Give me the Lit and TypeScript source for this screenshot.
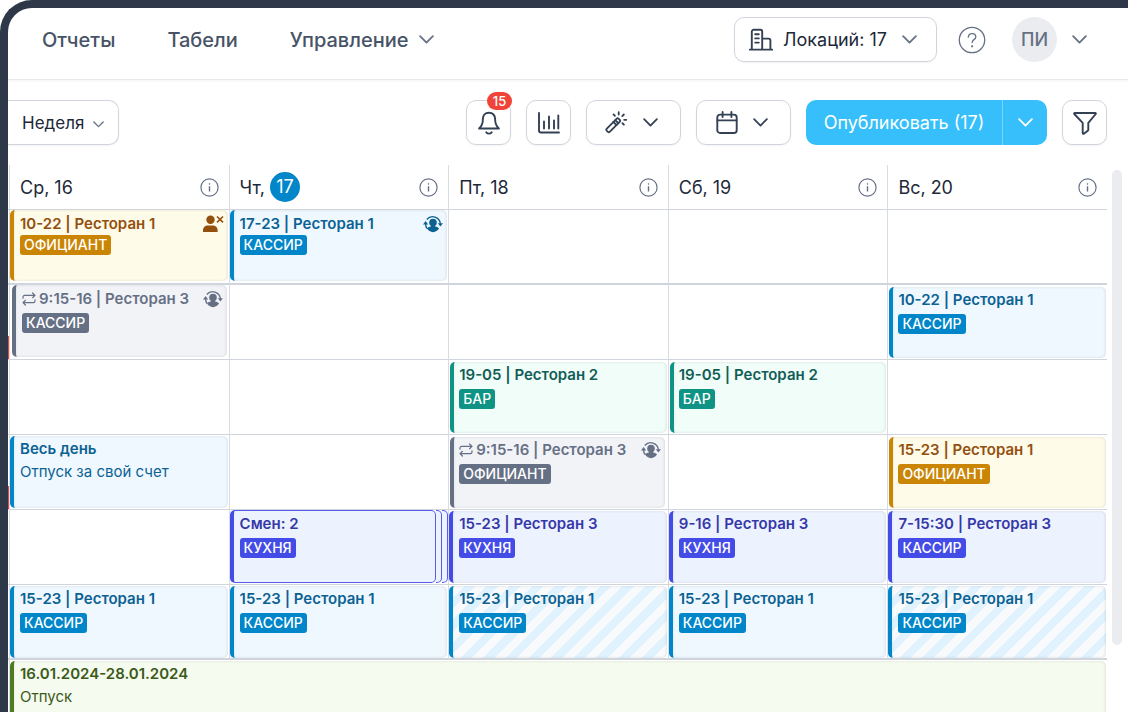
import { LitElement, html, css, svg, nothing } from "lit";
import { customElement, property } from "lit/decorators.js";
import { classMap } from "lit/directives/class-map.js";

interface Shift {
  tone: "gold" | "sky" | "gray" | "teal" | "indigo" | "moss";
  title: string;
  role?: string;
  note?: string;
  icon?: "swap" | "dismiss";
  repeat?: boolean;
  inset?: boolean;
  stack?: boolean;
  striped?: boolean;
  first?: boolean;
}

interface Row {
  alert?: boolean;
  heavy?: boolean;
  cells: (Shift | null)[];
}

const sky = (title: string, extra: Partial<Shift> = {}): Shift => ({ tone: "sky", title, role: "КАССИР", ...extra });

const DAYS = [
  { name: "Ср,", date: "16" },
  { name: "Чт,", date: "17", today: true },
  { name: "Пт,", date: "18" },
  { name: "Сб,", date: "19" },
  { name: "Вс,", date: "20" },
];

const ROWS: Row[] = [
  {
    heavy: true,
    cells: [
      { tone: "gold", title: "10-22 | Ресторан 1", role: "ОФИЦИАНТ", icon: "dismiss", first: true },
      sky("17-23 | Ресторан 1", { icon: "swap", first: true }),
      null, null, null,
    ],
  },
  {
    alert: true,
    cells: [
      { tone: "gray", title: "9:15-16 | Ресторан 3", role: "КАССИР", icon: "swap", repeat: true },
      null, null, null,
      sky("10-22 | Ресторан 1", { inset: true }),
    ],
  },
  {
    cells: [
      null, null,
      { tone: "teal", title: "19-05 | Ресторан 2", role: "БАР", inset: true },
      { tone: "teal", title: "19-05 | Ресторан 2", role: "БАР", inset: true },
      null,
    ],
  },
  {
    alert: true,
    cells: [
      { tone: "sky", title: "Весь день", note: "Отпуск за свой счет" },
      null,
      { tone: "gray", title: "9:15-16 | Ресторан 3", role: "ОФИЦИАНТ", icon: "swap", repeat: true, inset: true },
      null,
      { tone: "gold", title: "15-23 | Ресторан 1", role: "ОФИЦИАНТ", inset: true },
    ],
  },
  {
    cells: [
      null,
      { tone: "indigo", title: "Смен: 2", role: "КУХНЯ", stack: true },
      { tone: "indigo", title: "15-23 | Ресторан 3", role: "КУХНЯ" },
      { tone: "indigo", title: "9-16 | Ресторан 3", role: "КУХНЯ" },
      { tone: "indigo", title: "7-15:30 | Ресторан 3", role: "КАССИР" },
    ],
  },
  {
    heavy: true,
    cells: [
      sky("15-23 | Ресторан 1"),
      sky("15-23 | Ресторан 1"),
      sky("15-23 | Ресторан 1", { striped: true }),
      sky("15-23 | Ресторан 1"),
      sky("15-23 | Ресторан 1", { striped: true }),
    ],
  },
];

const icon = (size: number, body: unknown, width = 1.5, box = 24) => html`
  <svg width=${size} height=${size} viewBox="0 0 ${box} ${box}" fill="none" stroke="currentColor"
    stroke-width=${width} stroke-linecap="round" stroke-linejoin="round" aria-hidden="true">${body}</svg>`;

const chevron = (w: number) => html`
  <svg width=${w} height=${w / 2 + 1} viewBox="0 0 16 9" fill="none" stroke="currentColor"
    stroke-width="1.9" stroke-linecap="round" stroke-linejoin="round" aria-hidden="true"><path d="M1.2 1.2 8 8l6.800-6.800"/></svg>`;

const bell = icon(24, svg`<path d="M12 1.700c-3.800 0-6.100 2.700-6.100 6.200 0 5-1.300 7.300-3.800 9.600h19.800c-2.500-2.300-3.800-4.600-3.800-9.600 0-3.500-2.300-6.200-6.100-6.200Z"/><path d="M9.300 21.300c.7.900 1.600 1.300 2.700 1.300s2-.4 2.700-1.300"/>`, 1.9);
const chart = icon(24, svg`<path d="M2 2v17.500c0 1.100.9 2 2 2h18M7 17.500v-7M12 17.500V5.500M17 17.500v-8M21.300 17.500V4.500"/>`, 1.9);
const wand = icon(25, svg`<path d="M2.700 19.600 13.300 9a1.300 1.300 0 0 1 1.800 0l1.400 1.400a1.300 1.300 0 0 1 0 1.800L5.900 22.800a1.300 1.300 0 0 1-1.800 0l-1.400-1.400a1.300 1.300 0 0 1 0-1.800Z"/><path d="m9.800 12.500 3.200 3.200M11.700 10.600l3.200 3.200M15.300 4.700V2.300M19 6.300l1.600-1.600M21 10.200h2.200M19.200 13.800l1.500 1.500M11.300 6 9.900 4.600"/>`, 1.9, 26);
const calendar = icon(24, svg`<rect x="2.300" y="3.600" width="19.400" height="18.400" rx="2.800"/><path d="M2.500 9.400h19M7.600 1v5M16.400 1v5"/>`, 1.9);
const funnel = icon(24, svg`<path d="M1.700 2h20.600c.5 0 .8.600.4 1l-7.400 8.800v6.900c0 .4-.2.800-.5 1l-4 3c-.5.400-1.100 0-1.100-.6V11.800L1.300 3c-.4-.4-.1-1 .4-1Z"/>`, 1.9);
const building = icon(24, svg`<path d="M.8 21.600h22.400M2.800 21.400V3.600c0-1 .8-1.800 1.800-1.800h6.800c1 0 1.800.8 1.800 1.800v17.800M13.400 10.600h6.200c1 0 1.800.8 1.800 1.800v9M6.200 6.200h3.600M6.200 10.400h3.600M6.200 14.600h3.600"/>`, 1.9);
const help = html`<svg width="28" height="28" viewBox="0 0 28 28" fill="none" stroke="currentColor" stroke-width="1.300" stroke-linecap="round" aria-hidden="true"><circle cx="14" cy="14" r="12.700"/><path d="M10.300 11.200c.2-2.200 1.700-3.500 3.800-3.500s3.700 1.300 3.700 3.200c0 2.800-3.700 2.700-3.700 5.600"/><circle cx="14.100" cy="20.300" r=".5" fill="currentColor"/></svg>`;
const info = html`<svg width="19" height="19" viewBox="0 0 19 19" fill="none" stroke="currentColor" stroke-width="1.200" aria-hidden="true"><circle cx="9.500" cy="9.500" r="8.600"/><path d="M9.500 8.300v5.200" stroke-width="1.400"/><circle cx="9.500" cy="5.900" r=".5" fill="currentColor" stroke-width=".6"/></svg>`;
const repeatIcon = html`<svg width="14" height="14" viewBox="0 0 14 14" fill="none" stroke="currentColor" stroke-width="1.200" stroke-linecap="round" stroke-linejoin="round" aria-hidden="true"><path d="M1 6.200V5a1.600 1.600 0 0 1 1.600-1.600H13M10.600 1 13 3.400l-2.400 2.300M13 7.800V9a1.600 1.600 0 0 1-1.600 1.600H1M3.400 8.300 1 10.600 3.400 13"/></svg>`;
const swapIcon = html`<svg width="20" height="18" viewBox="0 0 20 18" aria-hidden="true"><g fill="currentColor"><circle cx="10" cy="7.500" r="3.800"/><path d="M7.900 9h4.200v2.600c2 .4 3.200 1 3.900 2A7.700 7.700 0 0 1 10 17.300a7.700 7.700 0 0 1-6-3.700c.7-1 1.900-1.600 3.900-2Z"/><path d="M0 9.400 2.600 6l2.600 3.400ZM14.800 8.200H20l-2.600 3.400Z"/></g><g fill="none" stroke="currentColor" stroke-width="1.400"><path d="M3.800 4.500a7.700 7.700 0 0 1 13.600 4.200M2.600 9c0 1.800.5 3.300 1.500 4.600"/></g></svg>`;
const dismissIcon = html`<svg width="21" height="18" viewBox="0 0 21 18" aria-hidden="true"><g fill="currentColor"><circle cx="7.500" cy="4.700" r="4.200"/><path d="M0 17v-1.800c0-3 2.300-4.700 4.800-4.700h5c2.500 0 4.800 1.700 4.800 4.700V17Z"/></g><path d="m14 1.500 6 5.800m0-5.800-6 5.800" stroke="currentColor" stroke-width="1.600"/></svg>`;

@customElement("shift-card")
export class ShiftCard extends LitElement {
  @property({ attribute: false }) shift!: Shift;

  static styles = css`
    :host { display: block; }
    .wrap { display: flex; }
    .card {
      flex: 1;
      min-width: 0;
      box-sizing: border-box;
      height: 72px;
      margin-top: 1px;
      margin-right: 1px;
      padding: 3px 4px 0 6px;
      border-left: 4px solid var(--bar);
      border-radius: 5px;
      background: var(--fill);
      color: var(--ink);
      box-shadow: inset -1px 0 3px rgb(16 24 40 / 6%), inset 0 0 3px rgb(16 24 40 / 6%);
    }
    .first { height: 71px; margin-top: 0; padding-top: 4px; }
    .repeating { margin: 0 2px; padding-top: 4px; }
    .inset { height: 71px; margin: 2px 1px 0 1px; padding-left: 5px; }
    .inset.gray { margin-right: 3px; }
    .gold { --bar: #ca8504; --fill: #fefbe8; --ink: #934f0e; }
    .sky { --bar: #0086c9; --fill: #f0f8ff; --ink: #0b6293; }
    .gray { --bar: #667085; --fill: #f2f3f7; --ink: #667085; }
    .teal { --bar: #0e9384; --fill: #f0fdf9; --ink: #125d56; }
    .indigo { --bar: #444ce7; --fill: #edf2ff; --ink: #3538a8; }
    .moss { --bar: #4f7a21; --fill: #f5fbee; --ink: #3b5a1a; }
    .striped {
      background: repeating-linear-gradient(135deg, #f9fafb 0 8px, #e0f2fe 8px 16px);
    }
    .stacked {
      height: 73px;
      margin: 0;
      border: 1px solid #555cea;
      border-left: 4px solid var(--bar);
      box-shadow: none;
    }
    .sheet {
      width: 6px;
      height: 73px;
      box-sizing: border-box;
      border: 1px solid #555cea;
      border-left: 0;
      border-radius: 0 5px 5px 0;
      background: #edf2ff;
    }
    .head {
      display: flex;
      align-items: center;
      gap: 3px;
      height: 20px;
      font-size: 15px;
      font-weight: 600;
      line-height: 20px;
      white-space: nowrap;
    }
    .title { flex: 1; }
    .head svg { flex: none; }
    .role {
      display: block;
      width: fit-content;
      margin-top: 4px;
      padding: 0 4px;
      border-radius: 3px;
      background: var(--bar);
      color: #fff;
      font-size: 14px;
      font-weight: 500;
      line-height: 20px;
    }
    .first .role { margin-top: 1px; }
    .note { margin-top: 3px; font-size: 15px; line-height: 20px; }
  `;

  render() {
    const s = this.shift;
    const classes = {
      card: true,
      [s.tone]: true,
      first: !!s.first,
      inset: !!s.inset,
      repeating: !!s.repeat && !s.inset,
      striped: !!s.striped,
      stacked: !!s.stack,
    };
    return html`
      <div class="wrap">
        <div class=${classMap(classes)}>
          <div class="head">
            ${s.repeat ? repeatIcon : nothing}
            <span class="title">${s.title}</span>
            ${s.icon === "swap" ? swapIcon : s.icon === "dismiss" ? dismissIcon : nothing}
          </div>
          ${s.role ? html`<span class="role">${s.role}</span>` : nothing}
          ${s.note ? html`<div class="note">${s.note}</div>` : nothing}
        </div>
        ${s.stack ? html`<div class="sheet"></div><div class="sheet"></div>` : nothing}
      </div>
    `;
  }
}

@customElement("app-root")
export class AppRoot extends LitElement {
  static styles = css`
    :host {
      display: block;
      height: 100vh;
      overflow: hidden;
      background: #fff;
      color: #1d2939;
      font-family: Inter, "Noto Sans", sans-serif;
    }
    * { box-sizing: border-box; }
    svg { display: block; flex: none; }
    button, select { font: inherit; color: inherit; cursor: pointer; }
    .frame {
      height: 100%;
      display: flex;
      flex-direction: column;
      overflow: hidden;
      border: solid #2f3849;
      border-width: 8px 0 0 8px;
      border-top-left-radius: 32px;
    }
    .topbar {
      flex: none;
      height: 72px;
      padding: 0 41px 8px 34px;
      display: flex;
      align-items: center;
      justify-content: space-between;
      border-bottom: 1px solid #e8eaee;
      box-shadow: 0 1px 3px rgb(16 24 40 / 5%);
    }
    .nav { display: flex; align-items: center; gap: 52px; font-size: 20px; line-height: 24px; color: #475467; font-weight: 500; }
    .nav a { color: inherit; text-decoration: none; }
    .menu, .round, .avatar {
      display: flex;
      align-items: center;
      padding: 0;
      border: 0;
      background: none;
    }
    .menu { gap: 11px; }
    .menu svg { color: #667085; }
    .account { display: flex; align-items: center; color: #667085; }
    .box {
      display: flex;
      align-items: center;
      justify-content: center;
      height: 45px;
      padding: 0;
      border: 1px solid #d0d5dd;
      border-radius: 10px;
      background: #fff;
      color: #344054;
      box-shadow: 0 1px 2px rgb(16 24 40 / 5%);
    }
    .places { padding: 0 19px 0 14px; gap: 10px; font-size: 18px; color: #1d2939; }
    .places .lead { color: #344054; }
    .places .tail { color: #667085; margin-left: 5px; }
    .round { margin-left: 21px; }
    .avatar { margin-left: 26px; gap: 15px; }
    .initials {
      width: 45px;
      height: 45px;
      border-radius: 50%;
      background: #eaecf0;
      font-size: 18px;
      font-weight: 500;
      line-height: 45px;
      text-align: center;
    }
    .toolbar {
      flex: none;
      display: flex;
      justify-content: space-between;
      padding: 20px 21px 20px 0;
    }
    .period { position: relative; color: #667085; }
    .period select {
      appearance: none;
      height: 45px;
      width: 111px;
      padding: 0 28px 0 14px;
      border: 1px solid #d0d5dd;
      border-left: 0;
      border-radius: 0 10px 10px 0;
      background: #fff;
      color: #1d2939;
      font-size: 17px;
      box-shadow: 0 1px 2px rgb(16 24 40 / 5%);
    }
    .period svg { position: absolute; right: 15px; top: 21px; pointer-events: none; }
    .actions { display: flex; gap: 15px; }
    .square { width: 45px; position: relative; }
    .wide { width: 95px; padding-right: 5px; gap: 14px; }
    .count {
      position: absolute;
      top: -9px;
      right: -2px;
      width: 25px;
      height: 18px;
      border-radius: 9px;
      background: #f04438;
      color: #fff;
      font-size: 13px;
      font-weight: 500;
      line-height: 18px;
    }
    .publish { display: flex; border-radius: 10px; overflow: hidden; background: #36bffa; color: #fff; }
    .publish button { height: 45px; padding: 0; border: 0; background: none; display: flex; align-items: center; justify-content: center; }
    .publish .main { width: 196px; font-size: 18px; }
    .publish .more { width: 45px; border-left: 1px solid #7cd4fd; }
    .board { flex: 1; min-height: 0; display: flex; align-items: flex-start; overflow: hidden; }
    table { flex: 1; table-layout: fixed; border-spacing: 0; width: 100%; }
    th, td { padding: 0; border-left: 1px solid #d8dbe3; border-bottom: 1px solid #d0d5dd; vertical-align: top; text-align: left; }
    th { height: 45px; font-weight: 400; font-size: 18px; }
    td { height: 75px; }
    .edge { width: 1px; border-left: 0; }
    .corner { height: 45px; }
    .heavy td { border-bottom: 2px solid #d0d5dd; }
    .day { height: 44px; display: flex; align-items: center; padding: 0 10px; gap: 5px; }
    .today { width: 30px; height: 30px; border-radius: 50%; background: #0086c9; color: #fff; line-height: 30px; text-align: center; }
    .day button { margin-left: auto; padding: 0; border: 0; background: none; color: #667085; }
    .alert { height: 23px; margin-top: 51px; background: #f04438; }
    .vacation { border-bottom: 0; }
    .scroll { flex: none; width: 10px; height: 475px; margin: 5px 6px 0 5px; border-radius: 5px; background: #eaecf0; }
  `;

  render() {
    return html`
      <div class="frame">
        <header class="topbar">
          <nav class="nav">
            <a href="#reports">Отчеты</a>
            <a href="#timesheets">Табели</a>
            <button class="menu">Управление ${chevron(15)}</button>
          </nav>
          <div class="account">
            <button class="box places">
              <span class="lead">${building}</span>Локаций: 17<span class="tail">${chevron(15)}</span>
            </button>
            <button class="round" aria-label="Помощь">${help}</button>
            <button class="avatar" aria-label="Профиль"><span class="initials">ПИ</span>${chevron(15)}</button>
          </div>
        </header>

        <div class="toolbar">
          <div class="period">
            <select aria-label="Период"><option>Неделя</option></select>
            ${chevron(11)}
          </div>
          <div class="actions">
            <button class="box square" aria-label="Уведомления">${bell}<span class="count">15</span></button>
            <button class="box square" aria-label="Статистика">${chart}</button>
            <button class="box wide" aria-label="Автозаполнение">${wand}${chevron(15)}</button>
            <button class="box wide" aria-label="Календарь">${calendar}${chevron(15)}</button>
            <div class="publish">
              <button class="main">Опубликовать (17)</button>
              <button class="more" aria-label="Ещё">${chevron(15)}</button>
            </div>
            <button class="box square" aria-label="Фильтр">${funnel}</button>
          </div>
        </div>

        <main class="board">
          <table>
            <thead>
              <tr>
                <td class="edge corner"></td>
                ${DAYS.map((d) => html`
                  <th scope="col">
                    <div class="day">
                      <span>${d.name}</span><span class=${d.today ? "today" : ""}>${d.date}</span>
                      <button aria-label="Сведения">${info}</button>
                    </div>
                  </th>`)}
              </tr>
            </thead>
            <tbody>
              ${ROWS.map((row) => html`
                <tr class=${row.heavy ? "heavy" : ""}>
                  <td class="edge">${row.alert ? html`<div class="alert"></div>` : nothing}</td>
                  ${row.cells.map((c) => html`<td>${c ? html`<shift-card .shift=${c}></shift-card>` : nothing}</td>`)}
                </tr>`)}
              <tr>
                <td class="edge vacation"></td>
                <td class="vacation" colspan="5">
                  <shift-card .shift=${{ tone: "moss", title: "16.01.2024-28.01.2024", note: "Отпуск" }}></shift-card>
                </td>
              </tr>
            </tbody>
          </table>
          <div class="scroll"></div>
        </main>
      </div>
    `;
  }
}
